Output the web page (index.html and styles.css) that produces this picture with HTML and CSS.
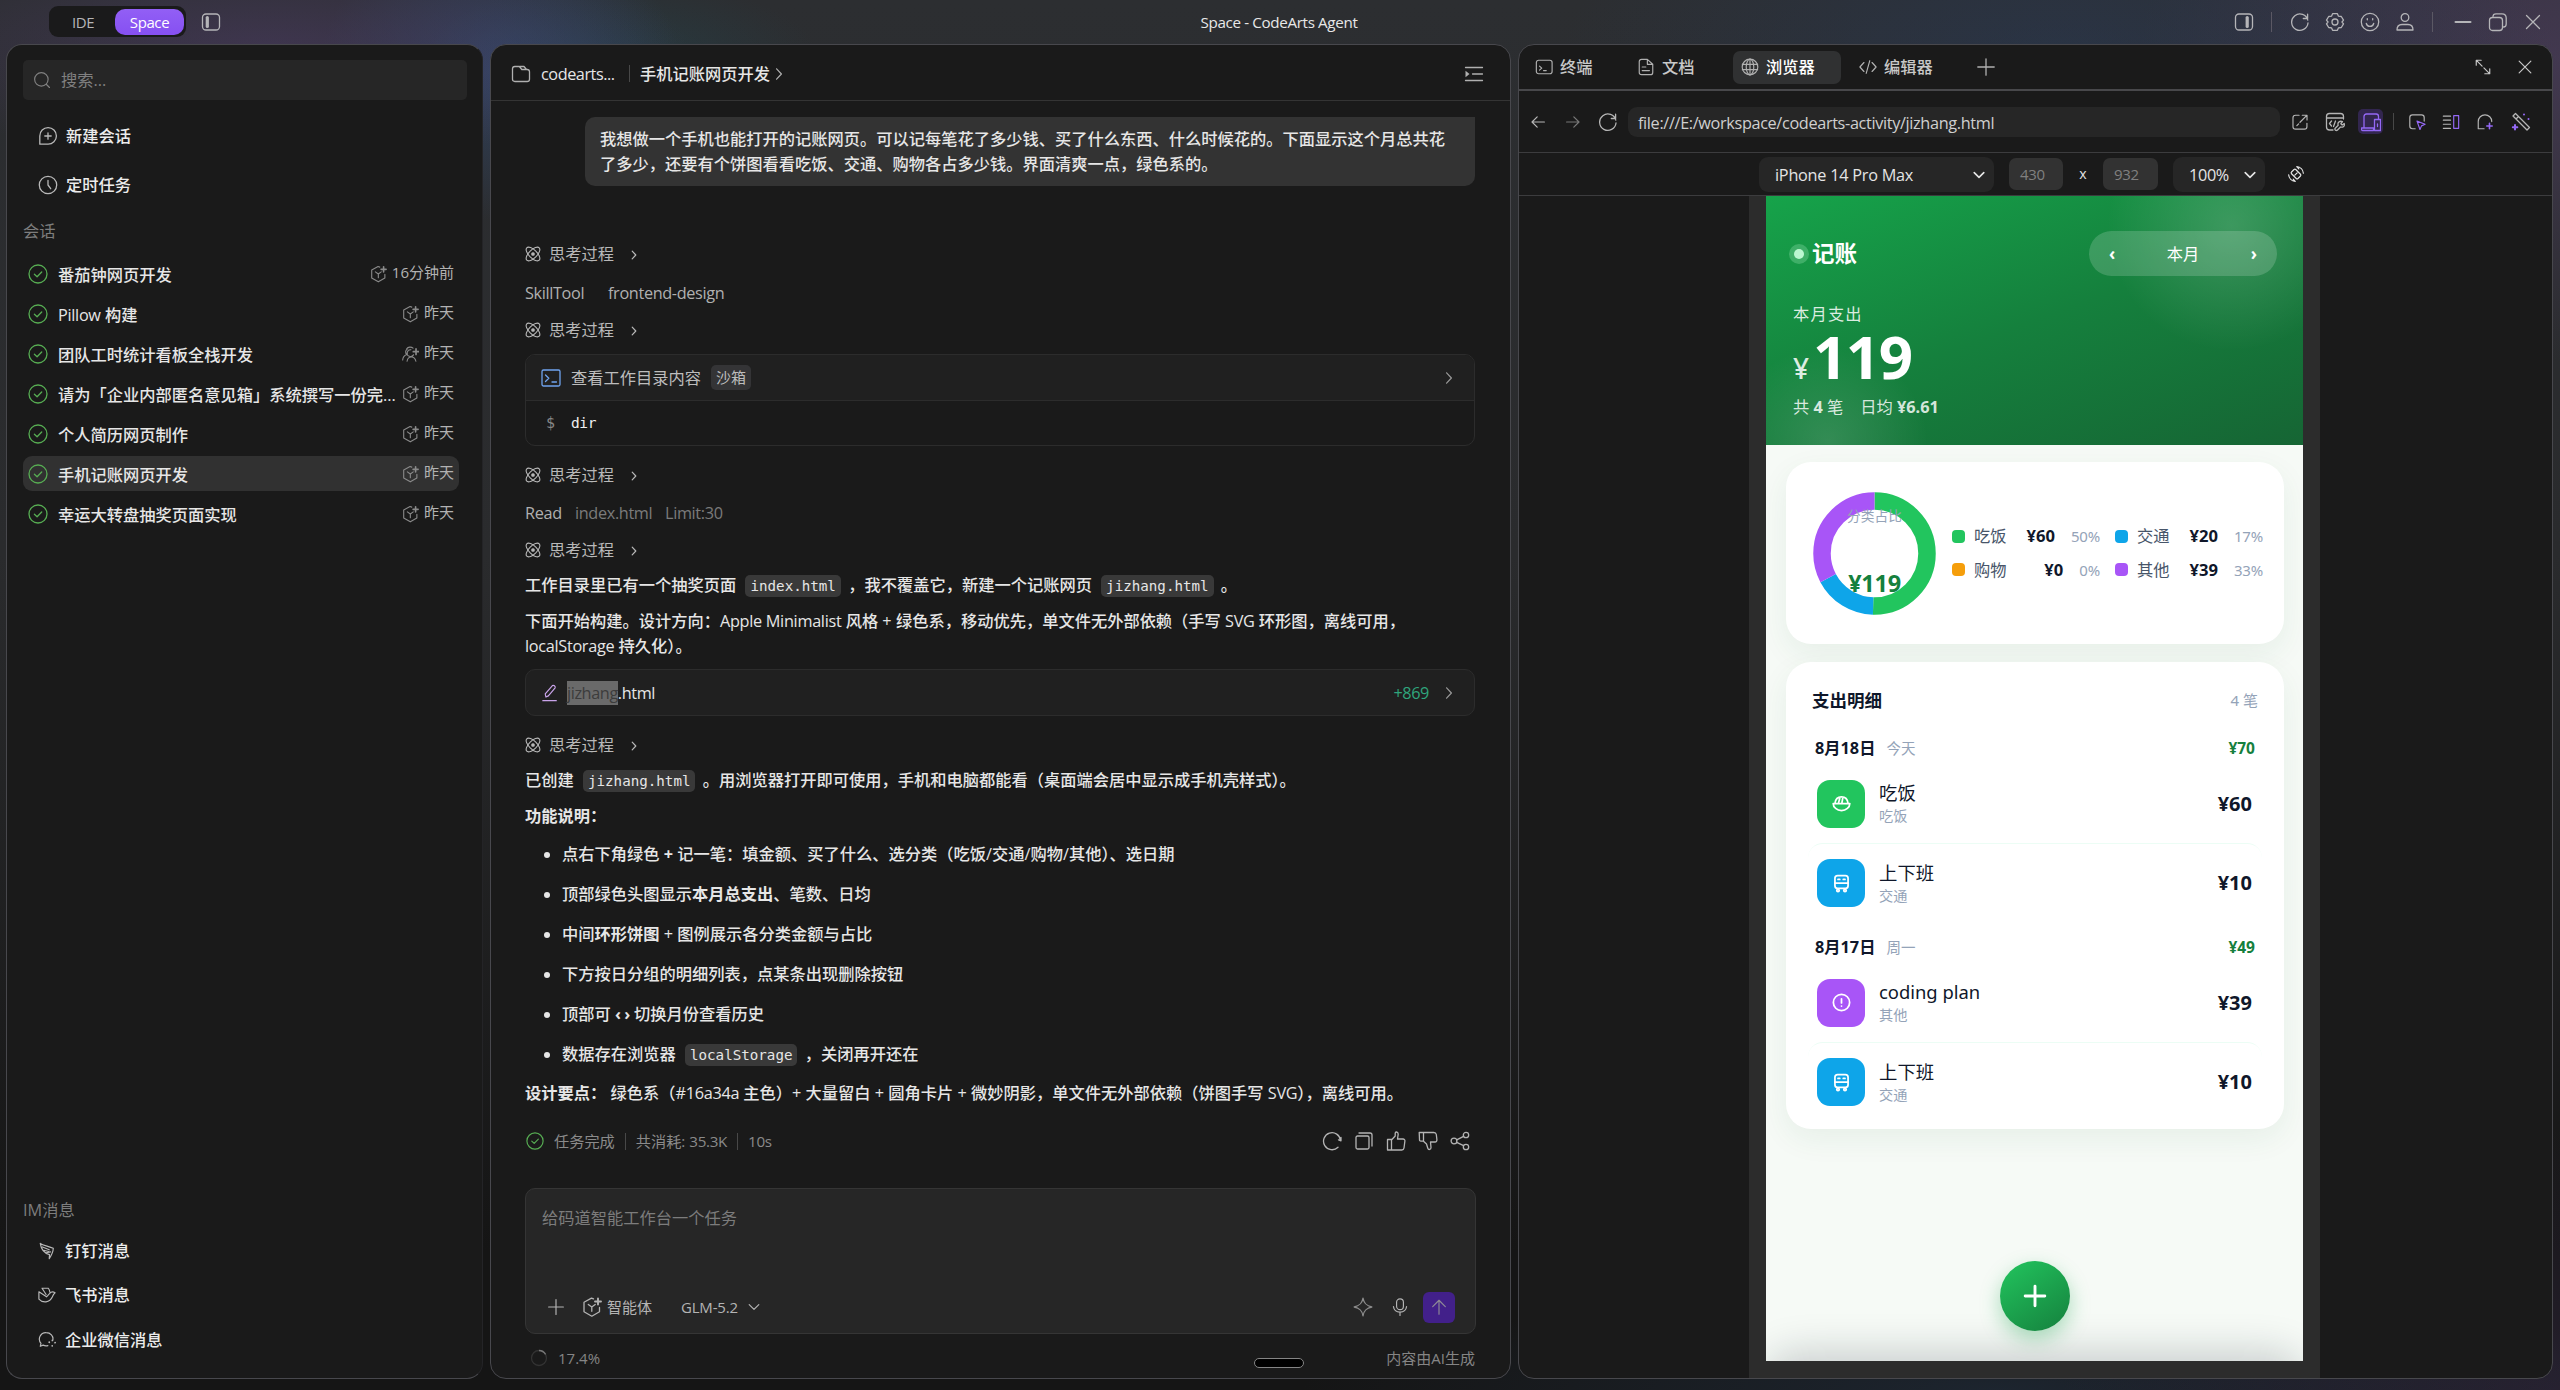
FILE: index.html
```html
<!DOCTYPE html>
<html lang="zh-CN">
<head>
<meta charset="utf-8">
<title>Space - CodeArts Agent</title>
<link rel="stylesheet" href="styles.css">
</head>
<body>
<svg class="defs" aria-hidden="true">
  <defs>
    <linearGradient id="lg1" x1="0" y1="0" x2="1" y2="0"><stop offset="0" stop-color="#e3342f"/><stop offset="1" stop-color="#8b3dff"/></linearGradient>
    <linearGradient id="lg2" x1="0" y1="0" x2="1" y2="1"><stop offset="0" stop-color="#e81f25"/><stop offset=".5" stop-color="#ff5a1f"/><stop offset="1" stop-color="#ffa51f"/></linearGradient>
    <linearGradient id="lg3" x1="1" y1="0" x2="0" y2="1"><stop offset="0" stop-color="#7a3cff"/><stop offset=".5" stop-color="#2f8dff"/><stop offset="1" stop-color="#22e0a8"/></linearGradient>
    <symbol id="panelL" viewBox="0 0 20 20"><rect x="1.5" y="2" width="17" height="16" rx="3.5"/><path d="M6.3 5.5v9" stroke-width="3.2"/></symbol>
    <symbol id="panelR" viewBox="0 0 20 20"><rect x="1.5" y="2" width="17" height="16" rx="3.5"/><path d="M13.2 5.5v9" stroke-width="3.2"/></symbol>
    <symbol id="reload" viewBox="0 0 20 20"><path d="M17.8 8.2A8.2 8.2 0 1 0 18 11M17.6 2.2v4.3h-4.3" /></symbol>
    <symbol id="gear" viewBox="0 0 20 20"><path d="M7.6 1.7h4.8l1.1 2.5 2.8.3 2.2 3.6L17 10l1.5 1.9-2.2 3.6-2.8.3-1.1 2.5H7.6l-1.1-2.5-2.8-.3-2.2-3.6L3 10 1.500 8.100l2.200-3.600 2.800-.3z"/><circle cx="10" cy="10" r="3"/></symbol>
    <symbol id="smile" viewBox="0 0 20 20"><circle cx="10" cy="10" r="8.700"/><path d="M6.300 11.500a3.800 3.800 0 0 0 7.400 0M7.300 6.600v1.200M12.700 6.600v1.200"/></symbol>
    <symbol id="user" viewBox="0 0 20 20"><circle cx="10" cy="5.500" r="3.800"/><path d="M2 18c0-3.500 2-5.500 5-5.500h6c3 0 5 2 5 5.500z"/></symbol>
    <symbol id="min" viewBox="0 0 20 20"><path d="M2.500 10h15" stroke-width="2"/></symbol>
    <symbol id="restore" viewBox="0 0 20 20"><rect x="1.500" y="5.500" width="13" height="13" rx="3"/><path d="M5 4.500c0-1.800 1.200-2.700 3-2.700h6c2.500 0 4.200 1.700 4.200 4.200v6c0 1.800-1.200 3-2.700 3"/></symbol>
    <symbol id="close" viewBox="0 0 20 20"><path d="M3.500 3.500l13 13M16.500 3.500l-13 13"/></symbol>
    <symbol id="search" viewBox="0 0 20 20"><circle cx="9.300" cy="9.300" r="7.500"/><path d="M15 15l3.300 3.300"/></symbol>
    <symbol id="newchat" viewBox="0 0 20 20"><path d="M1.800 18.200V10A8.300 8.300 0 1 1 10 18.200zM10 6.800v6.400M6.800 10h6.400"/></symbol>
    <symbol id="clock" viewBox="0 0 20 20"><circle cx="10" cy="10" r="8.700"/><path d="M10 5.500V10l2.700 3.700"/></symbol>
    <symbol id="check" viewBox="0 0 20 20"><circle cx="10" cy="10" r="9"/><path d="M6.400 10.200l2.700 2.500 4.600-4.700"/></symbol>
    <symbol id="agent" viewBox="0 0 20 20"><path d="M11.500 1.900L9.500 1.100 2 5.200v9.600l7.800 4.400 7.700-4.400v-4.300M6.300 7.500L9.800 10l3.400-2.500M9.800 10v4.300"/><path d="M16 1.500v6M13 4.500h6" stroke-width="1.900"/></symbol>
    <symbol id="team" viewBox="0 0 20 20"><path d="M13 3.200A5 5 0 0 0 5.500 4M6 4.500a3.800 3.800 0 0 0-.5 6C3 11.500 1 14 .8 17M10.500 5a4 4 0 1 0 3 6M6 18.500c.3-2.500 2-5 5-5s4.800 2 5.300 5"/><path d="M16.500 4v6.500M13.300 7.300h6.500" stroke-width="2"/></symbol>
    <symbol id="wing" viewBox="0 0 20 20"><path d="M2.500 1.500c3 2.500 9 3 14.500 5.500-.2 4.500-1.500 7-4.500 11.500l.3-4.500C6.500 12.500 3.500 8 2.500 1.500zM5 5.500l7.500 3.200M6.500 9.200l5.500 1.300M9 12l5-1"/></symbol>
    <symbol id="bird" viewBox="0 0 20 20"><path d="M1 6.500v8c4 4.500 12 4.500 15-2.500.7-2 1.500-3.500 3-4.500-2-1.200-4.500-1-6 .8L9.500 12 1 6.500M4.500 2.500h7c1 1.200 1.500 2.200 1.700 4.500M4.500 2.500l4.500 7"/></symbol>
    <symbol id="bubble" viewBox="0 0 20 20"><path d="M11 16.300c-1.800.4-3.800.2-5.300-.6L2.500 17l.8-3.300A7.200 7.200 0 0 1 9 1.800c5 0 8.300 4 7.500 8.200"/><path d="M12.500 12.500h.01M16 10.500h.01M19 13h.01M15.800 16.500h.01" stroke-width="2"/></symbol>
    <symbol id="folder" viewBox="0 0 20 20"><path d="M3.800 2.500h4.500l2.500 3h5.400c1.400 0 2.300.9 2.300 2.300v7.400c0 1.400-.9 2.300-2.300 2.300H3.800c-1.400 0-2.300-.9-2.300-2.300V4.800c0-1.400.9-2.300 2.300-2.300zM9 2.500h4l2.500 3"/></symbol>
    <symbol id="chev" viewBox="0 0 20 20"><path d="M7 3.500l6 6.500-6 6.500"/></symbol>
    <symbol id="chevd" viewBox="0 0 20 20"><path d="M4 7l6 6 6-6"/></symbol>
    <symbol id="outline" viewBox="0 0 20 20"><path d="M1.500 3.500h17M8.500 10h10M1.500 16.500h17"/><path d="M1.500 6.800v6.400L5.500 10z" fill="currentColor" stroke="none"/></symbol>
    <symbol id="atom" viewBox="0 0 20 20"><ellipse cx="10" cy="10" rx="11" ry="5" transform="rotate(45 10 10)"/><ellipse cx="10" cy="10" rx="11" ry="5" transform="rotate(-45 10 10)"/><circle cx="10" cy="10" r="1.600" fill="currentColor"/></symbol>
    <symbol id="term" viewBox="0 0 20 20"><rect x="1" y="2" width="18" height="16" rx="1.500"/><path d="M4.500 7l3.300 3.300-3.300 3.200M11 14h4.500"/></symbol>
    <symbol id="term2" viewBox="0 0 20 20"><rect x="1.500" y="2.500" width="17.500" height="15" rx="2.500"/><path d="M5 9l2.500 2.300L5 13.500M9.500 14h3"/></symbol>
    <symbol id="pen" viewBox="0 0 20 20"><path d="M5.500 14.500l-.8-3.500 8-9.300c1.500-.8 3.500.8 3 2.500l-7.500 9zM2 18.500h15"/></symbol>
    <symbol id="retry" viewBox="0 0 20 20"><path d="M18.500 9.500A8.500 8.500 0 1 0 16 16.300M19 6.500v3.300l-2.500-1"/></symbol>
    <symbol id="copy" viewBox="0 0 20 20"><rect x="2" y="5" width="13" height="13" rx="1.500"/><path d="M5 2h11c1.200 0 2 .8 2 2v11"/></symbol>
    <symbol id="up" viewBox="0 0 20 20"><path d="M1.500 8.500h4v10.500h-4zM5.500 9l3.700-4V2c.8-1.800 3-1 3 1.200L11.500 8h5.500c1.300 0 2 .9 1.900 2l-.9 7c-.2 1.200-1 2-2.200 2H5.500"/></symbol>
    <symbol id="down" viewBox="0 0 20 20"><path d="M5.500 1.500v8.700H3c-1.200 0-1.700-.8-1.500-2l-.3-6.700h14.500c1.500 0 2.400.8 2.600 2l.6 5c.1 1.500-.6 2.500-1.900 2.500h-4.500l.5 5.500c0 2.300-2.500 2.700-3.200.8L8.500 13 5.500 10.200"/></symbol>
    <symbol id="share" viewBox="0 0 20 20"><circle cx="4" cy="10" r="2.900"/><circle cx="16" cy="4" r="2.700"/><circle cx="16" cy="16" r="2.700"/><path d="M6.700 8.800l6.900-3.500M6.700 11.300l6.900 3.400"/></symbol>
    <symbol id="plus" viewBox="0 0 20 20"><path d="M10 1.800v16.400M1.800 10h16.400"/></symbol>
    <symbol id="star" viewBox="0 0 20 20"><path d="M10 1.200c1 5.300 3.200 7.600 8.800 8.800-5.600 1.200-7.800 3.500-8.800 8.800-1-5.300-3.200-7.600-8.800-8.800C6.800 8.800 9 6.500 10 1.200z"/></symbol>
    <symbol id="mic" viewBox="0 0 20 20"><rect x="6.200" y="1" width="7.600" height="12" rx="3.800"/><path d="M2.700 9.500c.5 4 3.300 6.200 7.300 6.200s6.800-2.200 7.300-6.200M10 16v3.500"/></symbol>
    <symbol id="arrup" viewBox="0 0 20 20"><path d="M10 18V3M3 9.500L10 2.500l7 7"/></symbol>
    <symbol id="doc" viewBox="0 0 20 20"><path d="M5 1.500h6.500l6 5.500v9c0 1.500-1 2.500-2.500 2.500H5c-1.500 0-2.500-1-2.500-2.500V4c0-1.500 1-2.500 2.500-2.500zM11.500 1.500v5.500h6M5.800 10h4M5.800 14h8"/></symbol>
    <symbol id="globe" viewBox="0 0 20 20"><circle cx="10" cy="10" r="8.700"/><ellipse cx="10" cy="10" rx="4.200" ry="8.700"/><path d="M1.500 7h17M1.500 13h17M10 1.300v17.400"/></symbol>
    <symbol id="code" viewBox="0 0 20 20"><path d="M5.500 5L1 10l4.500 5M14.500 5l4.500 5-4.500 5M12 3L8 17"/></symbol>
    <symbol id="expand" viewBox="0 0 20 20"><path d="M3 3l6 6M11 11l6 6M2.500 8V2.500H8M17.500 12v5.500H12"/></symbol>
    <symbol id="back" viewBox="0 0 20 20"><path d="M18 10H3M9 3.500L2.500 10 9 16.500"/></symbol>
    <symbol id="fwd" viewBox="0 0 20 20"><path d="M2 10h15M11 3.500l6.500 6.500-6.500 6.500"/></symbol>
    <symbol id="open" viewBox="0 0 20 20"><path d="M9 2.500H5c-1.500 0-2.800 1.200-2.800 2.700v10c0 1.500 1.300 2.700 2.800 2.700h10c1.500 0 2.700-1.200 2.700-2.700V11.500M12.500 2.500h5.300v5.300M17.300 3L10 10.300M6.500 14l2-2"/></symbol>
    <symbol id="devtool" viewBox="0 0 20 20"><path d="M8 18H4.500C2.800 18 1.500 17 1.500 15V4.500C1.500 2.800 2.800 1.500 4.500 1.500h11c1.700 0 3 1.300 3 3V7M1.500 6h17M6.500 9L4.500 11.500l2 2.500M10.500 9l-2 5.500M17.500 9.500c-3-1-5.300 1.300-4.300 3.700L10 16.500c-.5 1.500 1 2.500 2.300 1.700l3.200-3.200c2.500.8 4.500-1 3.700-3.500l-2 1.500-1.300-1.300z"/></symbol>
    <symbol id="device" viewBox="0 0 20 20"><path d="M3 15.500V4.500C3 3 4 2 5.500 2h9.700C16.700 2 17.500 3 17.500 4.500V7M.5 16h12v2.500h-11c-.6 0-1-.5-1-1zM13.500 7.500h6v11h-6zM16.500 12v2.500"/></symbol>
    <symbol id="rotate" viewBox="0 0 20 20"><rect x="6.300" y="4.300" width="7.400" height="11.400" rx="1.500" transform="rotate(-45 10 10)"/><path d="M8.500 11.500l3-3M11 .8a9 9 0 0 1 8.200 8.200M11 .8l2.500 2.800M9 19.200A9 9 0 0 1 .8 11M9 19.200l-2.500-2.800"/></symbol>
    <symbol id="bowl" viewBox="0 0 24 24"><path d="M2.500 12h19a9.500 8 0 0 1-19 0zM4.500 12C5 7.500 8 4.500 12 4.500s7 3 7.500 7.500M8.700 11l1.300-5M12.500 11l1-5.500"/></symbol>
    <symbol id="bus" viewBox="0 0 24 24"><rect x="4.500" y="3" width="15" height="14.500" rx="3"/><path d="M4.500 11.500h15M8 7.300h2M14 7.300h2"/><circle cx="8" cy="20" r="1.400"/><circle cx="16" cy="20" r="1.400"/></symbol>
    <symbol id="excl" viewBox="0 0 24 24"><circle cx="12" cy="12" r="9.300"/><path d="M12 7.800v4.700M12 16h.01"/></symbol>
  </defs>
</svg>

<header class="titlebar">
  <svg class="logo" viewBox="0 0 18 20" fill="none" stroke-width="2.800" stroke-linejoin="round"><path d="M16.500 1.500L2 15.500v3h5" stroke="url(#lg3)"/><path d="M1.500 1.500l14.700 14v3H11" stroke="url(#lg2)"/><path d="M1 1.700L17 1.800" stroke="url(#lg1)"/></svg>
  <div class="modes"><span class="mode">IDE</span><span class="mode on">Space</span></div>
  <svg class="ic s20 side"><use href="#panelL"/></svg>
  <div class="title">Space - CodeArts Agent</div>
  <div class="sys">
    <svg class="ic s20"><use href="#panelR"/></svg><i class="bar"></i>
    <svg class="ic s20"><use href="#reload"/></svg><svg class="ic s20"><use href="#gear"/></svg><svg class="ic s20"><use href="#smile"/></svg><svg class="ic s20"><use href="#user"/></svg><i class="bar b2"></i>
    <svg class="ic s20"><use href="#min"/></svg><svg class="ic s20"><use href="#restore"/></svg><svg class="ic s20"><use href="#close"/></svg>
  </div>
</header>

<main class="panels">
  <aside class="panel sidebar">
    <div class="search"><svg class="ic s18"><use href="#search"/></svg>搜索...</div>
    <nav class="nav">
      <a><svg class="ic s20"><use href="#newchat"/></svg>新建会话</a>
      <a><svg class="ic s20"><use href="#clock"/></svg>定时任务</a>
    </nav>
    <div class="label">会话</div>
    <ul class="sessions">
      <li><svg class="ic s20 ok"><use href="#check"/></svg><b>番茄钟网页开发</b><svg class="ic s18"><use href="#agent"/></svg><time>16分钟前</time></li>
      <li><svg class="ic s20 ok"><use href="#check"/></svg><b><span class="la">Pillow</span> 构建</b><svg class="ic s18"><use href="#agent"/></svg><time>昨天</time></li>
      <li><svg class="ic s20 ok"><use href="#check"/></svg><b>团队工时统计看板全栈开发</b><svg class="ic s18"><use href="#team"/></svg><time>昨天</time></li>
      <li><svg class="ic s20 ok"><use href="#check"/></svg><b>请为「企业内部匿名意见箱」系统撰写一份完...</b><svg class="ic s18"><use href="#agent"/></svg><time>昨天</time></li>
      <li><svg class="ic s20 ok"><use href="#check"/></svg><b>个人简历网页制作</b><svg class="ic s18"><use href="#agent"/></svg><time>昨天</time></li>
      <li class="active"><svg class="ic s20 ok"><use href="#check"/></svg><b>手机记账网页开发</b><svg class="ic s18"><use href="#agent"/></svg><time>昨天</time></li>
      <li><svg class="ic s20 ok"><use href="#check"/></svg><b>幸运大转盘抽奖页面实现</b><svg class="ic s18"><use href="#agent"/></svg><time>昨天</time></li>
    </ul>
    <div class="label im">IM消息</div>
    <nav class="nav imnav">
      <a><svg class="ic s18"><use href="#wing"/></svg>钉钉消息</a>
      <a><svg class="ic s18"><use href="#bird"/></svg>飞书消息</a>
      <a><svg class="ic s18"><use href="#bubble"/></svg>企业微信消息</a>
    </nav>
  </aside>

  <section class="panel chat">
    <header class="chat-head">
      <svg class="ic s20"><use href="#folder"/></svg><span class="proj">codearts...</span><i class="vbar"></i><span class="name">手机记账网页开发</span><svg class="ic s16 go"><use href="#chev"/></svg>
      <svg class="ic s20 out"><use href="#outline"/></svg>
    </header>
    <div class="stream">
      <div class="ask">我想做一个手机也能打开的记账网页。可以记每笔花了多少钱、买了什么东西、什么时候花的。下面显示这个月总共花<br>了多少，还要有个饼图看看吃饭、交通、购物各占多少钱。界面清爽一点，绿色系的。</div>
      <div class="think first"><svg class="ic s16"><use href="#atom"/></svg>思考过程<svg class="ic s12"><use href="#chev"/></svg></div>
      <div class="tool"><span class="t1">SkillTool</span><span class="t2">frontend-design</span></div>
      <div class="think"><svg class="ic s16"><use href="#atom"/></svg>思考过程<svg class="ic s12"><use href="#chev"/></svg></div>
      <div class="card">
        <div class="card-head"><svg class="ic s20 blue"><use href="#term"/></svg><span>查看工作目录内容</span><span class="chip">沙箱</span><svg class="ic s16 end"><use href="#chev"/></svg></div>
        <div class="cmd"><i>$</i>dir</div>
      </div>
      <div class="think aftercard"><svg class="ic s16"><use href="#atom"/></svg>思考过程<svg class="ic s12"><use href="#chev"/></svg></div>
      <div class="tool"><span class="r1">Read</span><span class="r2">index.html</span><span class="r3">Limit:30</span></div>
      <div class="think"><svg class="ic s16"><use href="#atom"/></svg>思考过程<svg class="ic s12"><use href="#chev"/></svg></div>
      <p>工作目录里已有一个抽奖页面 <code>index.html</code> ，我不覆盖它，新建一个记账网页 <code>jizhang.html</code> 。</p>
      <p>下面开始构建。设计方向：<span class="la">Apple Minimalist</span> 风格 + 绿色系，移动优先，单文件无外部依赖（手写 <span class="la">SVG</span> 环形图，离线可用，<br><span class="la">localStorage</span> 持久化）。</p>
      <div class="card file"><svg class="ic s18 violet"><use href="#pen"/></svg><span class="fn"><mark>jizhang</mark>.html</span><span class="add">+869</span><svg class="ic s16"><use href="#chev"/></svg></div>
      <div class="think aftercard"><svg class="ic s16"><use href="#atom"/></svg>思考过程<svg class="ic s12"><use href="#chev"/></svg></div>
      <p>已创建 <code>jizhang.html</code> 。用浏览器打开即可使用，手机和电脑都能看（桌面端会居中显示成手机壳样式）。</p>
      <p><strong>功能说明：</strong></p>
      <ul class="feat">
        <li>点右下角绿色 <strong>+</strong> 记一笔：填金额、买了什么、选分类（吃饭/交通/购物/其他）、选日期</li>
        <li>顶部绿色头图显示<strong>本月总支出</strong>、笔数、日均</li>
        <li>中间<strong>环形饼图</strong> + 图例展示各分类金额与占比</li>
        <li>下方按日分组的明细列表，点某条出现删除按钮</li>
        <li>顶部可 <span class="ang">‹ ›</span> 切换月份查看历史</li>
        <li>数据存在浏览器 <code>localStorage</code> ，关闭再开还在</li>
      </ul>
      <p class="last"><strong>设计要点：</strong> 绿色系（<span class="la">#16a34a</span> 主色）+ 大量留白 + 圆角卡片 + 微妙阴影，单文件无外部依赖（饼图手写 <span class="la">SVG</span>），离线可用。</p>
      <div class="status">
        <svg class="ic s18 ok"><use href="#check"/></svg><span>任务完成</span><i class="vbar"></i><span>共消耗: <span class="la">35.3K</span></span><i class="vbar"></i><span class="la">10s</span>
        <div class="acts"><svg class="ic s20"><use href="#retry"/></svg><svg class="ic s20"><use href="#copy"/></svg><svg class="ic s20"><use href="#up"/></svg><svg class="ic s20"><use href="#down"/></svg><svg class="ic s20"><use href="#share"/></svg></div>
      </div>
      <div class="composer">
        <div class="ph">给码道智能工作台一个任务</div>
        <div class="ctl">
          <svg class="ic s18"><use href="#plus"/></svg><svg class="ic s20 ag"><use href="#agent"/></svg><span class="agt">智能体</span><span class="model">GLM-5.2</span><svg class="ic s16"><use href="#chevd"/></svg>
          <svg class="ic s20 st"><use href="#star"/></svg><svg class="ic s18 mic"><use href="#mic"/></svg><button class="send"><svg class="ic s18"><use href="#arrup"/></svg></button>
        </div>
      </div>
      <div class="foot"><svg class="ring" viewBox="0 0 18 18"><circle cx="9" cy="9" r="7.500"/><path d="M9 1.500a7.500 7.500 0 0 1 6.600 3.900"/></svg><span>17.4%</span><i class="pill"></i><span class="ai">内容由AI生成</span></div>
    </div>
  </section>

  <section class="panel work">
    <div class="tabs">
      <div class="tab t-a"><svg class="ic s18"><use href="#term2"/></svg>终端</div>
      <div class="tab t-b"><svg class="ic s18"><use href="#doc"/></svg>文档</div>
      <div class="tab t-c on"><svg class="ic s18"><use href="#globe"/></svg>浏览器</div>
      <div class="tab t-d"><svg class="ic s18"><use href="#code"/></svg>编辑器</div>
      <svg class="ic s20 add-tab"><use href="#plus"/></svg>
      <svg class="ic s18 exp"><use href="#expand"/></svg><svg class="ic s18 cls"><use href="#close"/></svg>
    </div>
    <div class="urlbar">
      <svg class="ic s16"><use href="#back"/></svg><svg class="ic s16 dim"><use href="#fwd"/></svg><svg class="ic s20"><use href="#reload"/></svg>
      <div class="url">file:///E:/workspace/codearts-activity/jizhang.html</div>
      <div class="tools">
        <svg class="ic s18"><use href="#open"/></svg><svg class="ic s20"><use href="#devtool"/></svg><span class="devon"><svg class="ic s20"><use href="#device"/></svg></span><i class="vbar"></i>
        <svg class="ic s18" viewBox="0 0 20 20"><path d="M8 17.500H5c-1.700 0-3-1.300-3-3V5c0-1.700 1.300-3 3-3h10c1.700 0 3 1.300 3 3v4"/><path class="v" d="M10 9l9 3.500-4 1.800-1.700 4z"/></svg>
        <svg class="ic s18" viewBox="0 0 20 20"><path d="M1.500 3.500h8M1.500 8h8M1.500 12.500h8M1.500 17h8"/><path class="v" d="M13 3h5.500v14H13z"/></svg>
        <svg class="ic s18" viewBox="0 0 20 20"><path d="M9 17.500H2.500V9.500a7.500 7.500 0 0 1 15 0"/><path class="v" d="M15 11.500v6M12 14.500h6" stroke-width="1.800"/></svg>
        <svg class="ic s20" viewBox="0 0 20 20"><path d="M2 4l2.500-2.500 14 14L16 18zM5 7l2.500-2.500"/><path class="v" d="M4 13v4.500M1.800 15.300h4.500M13 2.500h.01M17.500 7h.01" stroke-width="2"/></svg>
      </div>
    </div>
    <div class="devbar">
      <div class="sel model-sel">iPhone 14 Pro Max<svg class="ic s16"><use href="#chevd"/></svg></div>
      <div class="num">430</div><span class="x">x</span><div class="num n2">932</div>
      <div class="sel zoom-sel">100%<svg class="ic s16"><use href="#chevd"/></svg></div>
      <svg class="ic s16 rot"><use href="#rotate"/></svg>
    </div>
    <div class="stage">
      <div class="frame">
        <div class="phone">
          <div class="hero">
            <div class="hero-top"><i class="dot"></i><h1>记账</h1><div class="month"><span>‹</span><em>本月</em><span>›</span></div></div>
            <div class="cap">本月支出</div>
            <div class="total"><small>¥</small>119</div>
            <div class="meta"><span>共 <b>4</b> 笔</span><span>日均 <b>¥6.61</b></span></div>
          </div>
          <div class="box sum">
            <div class="donut">
              <svg viewBox="0 0 123 123"><g fill="none" stroke-width="17.500" transform="rotate(-90 61.500 61.500)"><circle cx="61.500" cy="61.500" r="52.500" pathLength="119" stroke="#22c55e" stroke-dasharray="60 59"/><circle cx="61.500" cy="61.500" r="52.500" pathLength="119" stroke="#0ea5e9" stroke-dasharray="20 99" stroke-dashoffset="-60"/><circle cx="61.500" cy="61.500" r="52.500" pathLength="119" stroke="#a855f7" stroke-dasharray="39 80" stroke-dashoffset="-80"/></g></svg>
              <div class="dtext"><span>分类占比</span><b>¥119</b></div>
            </div>
            <div class="legend">
              <div class="lg"><i class="c-food"></i><span>吃饭</span><b>¥60</b><em>50%</em></div>
              <div class="lg"><i class="c-bus"></i><span>交通</span><b>¥20</b><em>17%</em></div>
              <div class="lg"><i class="c-shop"></i><span>购物</span><b>¥0</b><em>0%</em></div>
              <div class="lg"><i class="c-other"></i><span>其他</span><b>¥39</b><em>33%</em></div>
            </div>
          </div>
          <div class="box list">
            <div class="lhead"><h2>支出明细</h2><span>4 笔</span></div>
            <div class="day"><b>8月18日</b><span>今天</span><em>¥70</em></div>
            <div class="item"><i class="tile c-food"><svg class="ic s24"><use href="#bowl"/></svg></i><div><p>吃饭</p><small>吃饭</small></div><b>¥60</b></div>
            <div class="item next"><i class="tile c-bus"><svg class="ic s24"><use href="#bus"/></svg></i><div><p>上下班</p><small>交通</small></div><b>¥10</b></div>
            <div class="day d2"><b>8月17日</b><span>周一</span><em>¥49</em></div>
            <div class="item"><i class="tile c-other"><svg class="ic s24"><use href="#excl"/></svg></i><div><p>coding plan</p><small>其他</small></div><b>¥39</b></div>
            <div class="item next"><i class="tile c-bus"><svg class="ic s24"><use href="#bus"/></svg></i><div><p>上下班</p><small>交通</small></div><b>¥10</b></div>
          </div>
          <div class="fab"><svg class="ic s28"><use href="#plus"/></svg></div>
        </div>
      </div>
    </div>
  </section>
</main>
</body>
</html>
```
FILE: styles.css
```css
* { box-sizing: border-box; }
body {
  margin: 0; width: 2560px; height: 1390px; overflow: hidden;
  display: flex; flex-direction: column;
  font: 16.25px/24px "Open Sans", "Noto Sans CJK SC", sans-serif;
  color: #e6e6e6;
  background:
    radial-gradient(420px 110px at 270px 50px, rgba(82,62,110,.5), transparent),
    radial-gradient(180px 150px at 500px 70px, rgba(52,82,130,.55), transparent),
    radial-gradient(200px 80px at 620px 60px, rgba(35,70,80,.5), transparent),
    radial-gradient(500px 200px at 2060px 60px, rgba(40,60,95,.45), transparent),
    radial-gradient(420px 300px at 2560px 60px, rgba(85,65,105,.55), transparent),
    radial-gradient(500px 260px at 2560px 1390px, rgba(75,55,100,.3), transparent),
    radial-gradient(700px 100px at 2000px 1390px, rgba(40,60,85,.4), transparent),
    linear-gradient(#2c2e31 0, #2a2b2d 40%, #151515 90%);
}
p, ul, h1, h2 { margin: 0; padding: 0; list-style: none; }
i, em { font-style: normal; }
.defs { display: none; }
.ic { fill: none; stroke: currentColor; stroke-width: 1.3; stroke-linecap: round; stroke-linejoin: round; flex: none; display: block; overflow: visible; }
.s12 { width: 12px; height: 12px; stroke-width: 2; }
.s16 { width: 16px; height: 16px; stroke-width: 1.5; }
.s18 { width: 18px; height: 18px; }
.s20 { width: 20px; height: 20px; }
.s24 { width: 21px; height: 21px; stroke-width: 2; }
.s28 { width: 24px; height: 24px; stroke-width: 2.4; }
.ok { color: #57ad53; }
.la { letter-spacing: -.3px; }
.vbar { width: 1px; height: 17px; background: #484848; }

/* title bar */
.titlebar { height: 44px; flex: none; display: flex; align-items: center; padding: 0 17px 1px 13px; color: #b5b5b8; }
.logo { width: 18px; height: 20px; margin-right: 18px; overflow: visible; }
.modes { width: 137px; height: 31px; border-radius: 9px; background: #1a1a1b; display: flex; align-items: center; padding: 0 2px; }
.mode { width: 64px; text-align: center; font-size: 15px; letter-spacing: -.4px; }
.mode.on { width: 69px; height: 26px; line-height: 26px; border-radius: 10px; background: linear-gradient(#925ff5, #8650f2); color: #fff; }
.side { margin-left: 15px; }
.title { width: 180px; margin-left: 968px; text-align: center; font-size: 15.2px; letter-spacing: -.35px; color: #e8e8e8; white-space: nowrap; }
.sys { margin-left: auto; display: flex; align-items: center; gap: 15px; }
.bar { width: 1px; height: 20px; background: #5b5864; margin: 0 3px 0 2px; }
.bar.b2 { margin-right: 5px; }

.panels { flex: 1; display: flex; gap: 7px; padding: 0 8px 11px 6px; min-height: 0; }
.panel { background: #1a1a1a; border: 1px solid #48484d; border-radius: 16px; display: flex; flex-direction: column; overflow: hidden; }

/* sidebar */
.sidebar { width: 477px; padding: 15px 15px 0 16px; flex: none; border-right-color: #242427; }
.search { height: 40px; border-radius: 5px; background: #262626; display: flex; align-items: center; gap: 10px; padding: 0 10px; color: #808080; }
.nav { display: flex; flex-direction: column; padding-left: 15px; margin-top: 11px; font-weight: 500; color: #ececec; }
.nav a { height: 49px; display: flex; align-items: center; gap: 8px; }
.nav .ic { color: #b8b8b8; }
.label { margin-top: 10px; line-height: 24px; color: #7d7d7d; }
.sessions { margin-top: 13px; display: flex; flex-direction: column; gap: 5px; width: 436px; }
.sessions li { height: 35px; border-radius: 9px; display: flex; align-items: center; padding: 0 5px; }
.sessions .active { background: #313131; }
.sessions b { font-weight: 500; margin-left: 10px; margin-right: auto; padding-top: 2px; white-space: nowrap; }
.sessions .s18 { width: 17px; color: #8a8a8a; }
.sessions time { font-size: 15px; margin-left: 5px; color: #b2b2b2; padding-bottom: 3px; }
.label.im { margin-top: auto; }
.imnav { margin: 6px 0 16px; }
.imnav a { height: 44.6px; gap: 9px; }

/* chat */
.chat { width: 1021px; flex: none; margin-left: 0; }
.chat-head { height: 56px; flex: none; border-bottom: 1px solid #343434; display: flex; align-items: center; padding: 2px 26px 0 20px; }
.chat-head .ic { color: #b0b0b0; }
.proj { margin-left: 10px; width: 88px; letter-spacing: -.45px; }
.name { margin-left: 10px; font-weight: 500; }
.chat-head .go { margin-left: 1px; }
.chat-head .out { margin-left: auto; }
.stream { flex: 1; display: flex; flex-direction: column; padding: 16px 35px 0 34px; }
.ask { width: 890px; height: 69px; margin-left: auto; background: #333; border-radius: 10px 0 10px 10px; padding: 10px 15px; line-height: 25px; font-weight: 500; white-space: nowrap; }
.think { height: 24px; display: flex; align-items: center; margin-top: 13px; color: #b8b8b8; }
.think .s16 { margin-right: 8px; stroke-width: 1.4; overflow: hidden; }
.think .s12 { margin: 2px 0 0 14px; }
.think.first { margin-top: 56px; }
.tool { height: 24px; display: flex; margin-top: 15px; color: #b0b0b0; letter-spacing: -.35px; }
.t1 { width: 83px; }
.r1 { width: 50px; }
.r2 { width: 90px; color: #7b7b7b; }
.r3 { color: #7b7b7b; }
.card { border: 1px solid #2c2c2c; border-radius: 10px; height: 92px; margin-top: 12px; overflow: hidden; }
.card-head { height: 46px; background: #202020; border-bottom: 1px solid #2c2c2c; display: flex; align-items: center; padding: 0 17px 0 15px; color: #bdbdbd; }
.card-head .blue { color: #6fa3ee; margin-right: 10px; }
.chip { margin-left: 10px; height: 25px; line-height: 25px; padding: 0 5px; border-radius: 5px; background: #343436; font-size: 15px; }
.end { margin-left: auto; color: #999; }
.cmd { height: 44px; display: flex; align-items: center; padding-left: 20px; font: 14.5px "DejaVu Sans Mono", monospace; letter-spacing: -.4px; color: #f0f0f0; }
.cmd i { width: 25px; color: #868686; font-size: 15px; }
.think.aftercard { margin-top: 17px; }
.aftercard + .tool { margin-top: 14px; }
.stream > p { line-height: 25px; margin-top: 11px; font-weight: 500; white-space: nowrap; }
.stream strong { font-weight: 700; }
code { font: 14.2px "DejaVu Sans Mono", monospace; letter-spacing: 0; background: #393939; border-radius: 5px; padding: 3px 5px; margin: 0 3px 0 5px; }
.file { height: 47px; margin-top: 10px; background: #202020; display: flex; align-items: center; padding: 0 17px 0 15px; }
.file .violet { color: #c9a3ea; }
.fn { margin-left: 8px; letter-spacing: -.4px; }
mark { background: #6a6a6a; color: #3c3c3c; padding: 1px 0; }
.add { margin-left: auto; color: #2fa57c; margin-right: 12px; letter-spacing: -.4px; }
.file .s16 { color: #999; }
.feat { margin-top: 13px; display: flex; flex-direction: column; gap: 15px; font-weight: 500; padding-left: 37px; }
.feat li { height: 25px; line-height: 25px; list-style: disc outside; white-space: nowrap; }
.ang { letter-spacing: -.5px; font-weight: 700; }
.stream > .last { margin-top: 14px; }
.status { height: 24px; margin-top: 23px; display: flex; align-items: center; gap: 10px; color: #8a8a8a; font-size: 15.2px; padding-left: 1px; }
.acts { margin-left: auto; display: flex; gap: 12px; color: #b4b4b4; margin-right: 5px; }
.composer { margin-top: 35px; height: 146px; width: 951px; border: 1px solid #353535; border-radius: 10px; background: #262626; padding: 17px 20px 10px 16px; display: flex; flex-direction: column; justify-content: space-between; color: #b4b4b4; }
.ph { color: #7c7c7c; }
.ctl { display: flex; align-items: center; padding-left: 5px; height: 32px; font-size: 15px; }
.ag { margin: 0 5px 0 17px; }
.model { margin: 0 8px 0 29px; letter-spacing: -.2px; }
.st { margin-left: auto; color: #8b8b8b; }
.mic { margin: 0 14px 0 18px; }
.send { width: 32px; height: 31px; border: 0; border-radius: 6px; background: #42208a; color: #8f8a96; display: flex; align-items: center; justify-content: center; padding: 0; }
.foot { height: 24px; margin-top: 12px; display: flex; align-items: center; color: #858585; font-size: 15px; padding-left: 5px; }
.ring { width: 18px; height: 18px; margin-right: 10px; fill: none; stroke: #333; stroke-width: 1.3; }
.ring path { stroke: #777; }
.pill { width: 50px; height: 10px; border: 1px solid #858585; border-radius: 5px; background: #000; margin: 10px 82px 0 auto; }

/* workspace */
.work { width: 1035px; flex: none; }
.tabs { height: 46px; flex: none; border-bottom: 2px solid #48484b; display: flex; align-items: center; padding: 0 18px 0 8px; color: #c8c8c8; font-weight: 500; }
.tab { height: 33px; border-radius: 7px; display: flex; align-items: center; gap: 7px; padding-left: 8px; }
.t-a { width: 102px; } .t-b { width: 104px; } .t-c { width: 108px; } .t-d { width: 134px; padding-left: 18px; }
.tab.on { background: #303132; color: #fff; }
.tab .ic { color: #b0b0b0; }
.add-tab { color: #b0b0b0; margin-left: 1px; }
.exp { margin-left: auto; }
.cls { margin-left: 24px; }
.urlbar { height: 62px; flex: none; border-bottom: 1px solid #3c3c3e; display: flex; align-items: center; padding: 0 20px 0 11px; color: #b5b5b5; }
.urlbar > .ic + .ic { margin-left: 17px; }
.urlbar > .dim.dim { color: #777; margin-left: 19px; }
.url { width: 652px; height: 30px; margin-left: 10px; line-height: 32px; border-radius: 9px; background: #262626; color: #cfcfcf; padding-left: 10px; letter-spacing: -.35px; }
.tools { margin-left: 11px; display: flex; align-items: center; gap: 16px; }
.tools .v { stroke: #9468f5; }
.tools .vbar { margin: 0 -2px; }
.tools > :last-child { margin-left: 1px; }
.devon { width: 25px; height: 25px; background: #32264f; border-radius: 5px; display: flex; align-items: center; justify-content: center; color: #9468f5; margin: 0 -4px 0 -3px; }
.devbar { height: 43px; flex: none; border-bottom: 1px solid #3c3c3e; display: flex; align-items: center; padding-left: 240px; color: #e4e4e4; }
.sel { height: 35px; border-radius: 9px; background: #262626; display: flex; align-items: center; justify-content: space-between; padding: 1px 7px 0 16px; letter-spacing: -.35px; }
.sel .ic { stroke-width: 2; }
.model-sel { width: 235px; letter-spacing: -.25px; }
.num { width: 54px; height: 32px; line-height: 33px; border-radius: 7px; background: #323232; color: #808080; padding-left: 11px; margin-left: 15px; font-size: 15px; letter-spacing: -.3px; }
.x { width: 40px; text-align: center; font-size: 14px; }
.n2 { margin-left: 0; width: 55px; }
.zoom-sel { width: 92px; margin-left: 15px; }
.rot { margin-left: 23px; }
.stage { flex: 1; min-height: 0; padding-left: 230px; }
.frame { width: 571px; height: 100%; background: #2c2c2c; padding: 0 17px 17px; }

/* phone page */
.phone { position: relative; width: 537px; height: 100%; overflow: hidden; background: #f6faf6; color: #0f172a; font-family: "Noto Sans", "Noto Sans CJK SC", sans-serif; display: flex; flex-direction: column; }
.phone::after { content: ""; position: absolute; left: 0; right: 0; top: 100%; height: 100px; border-radius: 30px; box-shadow: 0 -8px 40px rgba(15,23,42,.2); }
.hero { height: 249px; flex: none; padding: 35px 26px 0 27px; color: #fff;
  background: radial-gradient(125px 125px at 466px 30px, rgba(255,255,255,.17), transparent), radial-gradient(100px 95px at 62px 245px, rgba(255,255,255,.13), transparent), linear-gradient(160deg, #16a34a, #15803d 50%, #166534); }
.hero-top { height: 45px; display: flex; align-items: center; }
.dot { width: 10px; height: 10px; border-radius: 50%; background: #bbf7d0; box-shadow: 0 0 0 5px rgba(187,247,208,.25); margin: 0 8px 0 1px; }
h1 { font-size: 22.5px; line-height: 30px; font-weight: 700; }
.month { margin-left: auto; width: 188px; height: 45px; border-radius: 23px; background: rgba(255,255,255,.17); display: flex; align-items: center; justify-content: space-between; padding: 0 20px; }
.month span { font-size: 17px; font-weight: 700; }
.month em { font-size: 16.25px; }
.cap { margin-top: 26px; font-size: 16.25px; letter-spacing: 1.2px; color: rgba(255,255,255,.85); }
.total { margin-top: -4px; height: 73px; line-height: 68px; font-size: 60px; font-weight: 700; letter-spacing: -1.5px; display: flex; align-items: baseline; }
.total small { font-size: 28px; font-weight: 500; margin-right: 4px; opacity: .85; letter-spacing: 0; }
.meta { display: flex; gap: 17px; font-size: 16.25px; color: rgba(255,255,255,.84); }
.box { width: 498px; margin: 17px 0 0 20px; background: #fff; border-radius: 25px; box-shadow: 0 10px 30px rgba(22,101,52,.07); flex: none; }
.sum { height: 182px; display: flex; align-items: center; padding-left: 27px; }
.donut { width: 123px; height: 123px; position: relative; }
.donut svg { display: block; }
.dtext { position: absolute; inset: 0; display: flex; flex-direction: column; align-items: center; justify-content: space-between; padding: 12px 0 18px; }
.dtext span { font-size: 13.75px; color: #94a3b8; }
.dtext b { font-size: 23.5px; letter-spacing: -.3px; line-height: 28px; color: #15803d; }
.legend { display: grid; grid-template-columns: 148px 148px; column-gap: 15px; row-gap: 9.5px; margin-left: 16px; }
.lg { display: flex; align-items: center; font-size: 16.25px; }
.lg i { width: 13px; height: 13px; border-radius: 4px; margin-right: 9px; }
.lg span { color: #475569; margin-right: auto; }
.lg b { font-size: 16.6px; }
.lg em { font-size: 15px; color: #94a3b8; margin-left: 16px; letter-spacing: -.2px; }
.c-food { background: #22c55e; } .c-bus { background: #0ea5e9; } .c-shop { background: #f59e0b; } .c-other { background: #a855f7; }
.list { margin-top: 18px; height: 467px; padding: 23px 22px 0; }
.lhead { height: 30px; display: flex; justify-content: space-between; align-items: center; padding: 0 4px; color: #94a3b8; font-size: 15px; }
h2 { font-size: 17.5px; font-weight: 700; color: #0f172a; }
.day { height: 24px; margin-top: 21px; display: flex; align-items: center; padding: 0 7px; font-size: 16.25px; }
.day span { margin-left: 11px; font-size: 14.5px; color: #94a3b8; }
.day em { margin-left: auto; font-weight: 700; font-size: 15.5px; color: #15803d; }
.item { height: 79px; display: flex; align-items: center; padding: 0 9px; border-radius: 15px; }
.day + .item { margin-top: 4px; }
.item.next { border-top: 1px solid #ecfdf5; }
.tile { width: 48px; height: 48px; border-radius: 13px; display: flex; align-items: center; justify-content: center; color: #fff; margin-right: 14px; }
.item p { font-size: 18.4px; line-height: 25px; }
.item small { display: block; font-size: 14.2px; line-height: 22px; color: #94a3b8; }
.item > b { margin-left: auto; margin-right: 1px; font-size: 20px; }
.day.d2 { margin-top: 13px; }
.fab { position: absolute; left: 234px; top: 1065px; width: 70px; height: 70px; border-radius: 50%; background: linear-gradient(145deg, #22c55e, #15803d); box-shadow: 0 8px 20px rgba(22,163,74,.35); color: #fff; display: flex; align-items: center; justify-content: center; z-index: 1; }
```
